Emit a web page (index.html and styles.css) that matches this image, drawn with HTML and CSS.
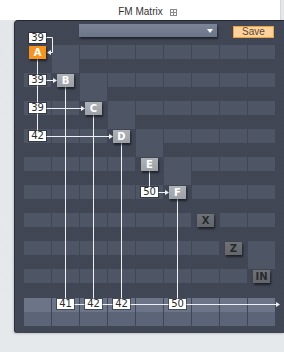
FILE: index.html
```html
<!DOCTYPE html>
<html lang="en">
<head>
    <meta charset="UTF-8">
    <title>FM Matrix</title>
    <link rel="stylesheet" href="styles.css">
</head>
<body>

<div class="title">
    <span>FM Matrix</span>
    <span class="title-icon"></span>
</div>

<div class="panel">
    <div class="toolbar">
        <div class="preset">
            <span class="arrow"></span>
        </div>
        <div class="save">Save</div>
    </div>

    <div class="matrix">
        <!-- background cells, filled in by script.js -->
        <div class="grid cells"></div>

        <!-- wires between operators -->
        <svg class="wires" width="252" height="295" viewBox="0 0 252 295">
            <g fill="none" stroke="#eef0f3" stroke-width="1">
                <path d="M22 6.5H28.5V21.5H25"/>
                <path d="M13.5 28V100"/>
                <path d="M22 49.5H31"/>
                <path d="M22 77.5H59"/>
                <path d="M22 105.5H87"/>
                <path d="M41.5 56V268"/>
                <path d="M69.5 84V268"/>
                <path d="M97.5 112V268"/>
                <path d="M125.5 139V156"/>
                <path d="M134 161.5H143"/>
                <path d="M153.5 168V268"/>
                <path d="M50 273.5H253"/>
            </g>
            <g fill="#eef0f3">
                <polygon points="23,21.5 27,19 27,24"/>
                <polygon points="33,49.5 29,47 29,52"/>
                <polygon points="61,77.5 57,75 57,80"/>
                <polygon points="89,105.5 85,103 85,108"/>
                <polygon points="145,161.5 141,159 141,164"/>
                <polygon points="256,273.5 252,271 252,276"/>
            </g>
        </svg>

        <div class="grid nodes">
            <div class="num fb-a">39</div>
            <div class="mod on m-a">A</div>

            <div class="num in-b">39</div>
            <div class="mod m-b">B</div>

            <div class="num in-c">39</div>
            <div class="mod m-c">C</div>

            <div class="num in-d">42</div>
            <div class="mod m-d">D</div>

            <div class="mod m-e">E</div>

            <div class="num in-f">50</div>
            <div class="mod m-f">F</div>

            <div class="mod fx m-x">X</div>
            <div class="mod fx m-z">Z</div>
            <div class="mod fx m-in">IN</div>

            <!-- output levels -->
            <div class="num out out-b">41</div>
            <div class="num out out-c">42</div>
            <div class="num out out-d">42</div>
            <div class="num out out-f">50</div>
        </div>
    </div>
</div>

<script src="script.js"></script>
</body>
</html>
```

FILE: styles.css
```css
body {
    margin: 0;
    width: 284px;
    height: 352px;
    overflow: hidden;
    background: linear-gradient(#e3e7e9, #e6e9eb);
    font-family: "Liberation Sans", Arial, sans-serif;
}

.title {
    width: 281px;
    height: 20px;
    box-sizing: border-box;
    padding: 4px 0 0 15px;
    background: #fff;
    border-right: 1px solid #d4d7da;
    display: flex;
    justify-content: center;
    gap: 7px;
    font-size: 10px;
    line-height: 16px;
    color: #333;
}

.title-icon {
    width: 5px;
    height: 5px;
    margin-top: 5px;
    border: 1px solid #8a8a8a;
    background:
        linear-gradient(#8a8a8a, #8a8a8a) center / 100% 1px no-repeat,
        linear-gradient(#8a8a8a, #8a8a8a) center / 1px 100% no-repeat;
}

.panel {
    margin-left: 14px;
    height: 312px;
    padding-left: 9px;
    border-top: 1px solid #232830;
    border-left: 1px solid #2b3039;
    border-radius: 4px 0 0 3px;
    background-color: #393f4e;
    background-image: radial-gradient(circle at 1px 1px, rgba(255, 255, 255, 0.06) 0.6px, transparent 0.9px);
    background-size: 2px 2px;
    box-shadow: -1px 1px 2px rgba(0, 0, 0, 0.15);
}

/* preset menu and save button */
.toolbar {
    display: flex;
    height: 17px;
    padding-left: 55px;
}

.preset {
    width: 138px;
    height: 13px;
    margin-top: 3px;
    background: linear-gradient(#7b8597, #6b7588);
    box-shadow: 1px 2px 2px rgba(0, 0, 0, 0.5);
    display: flex;
    justify-content: flex-end;
    align-items: center;
}

.preset .arrow {
    width: 0;
    height: 0;
    margin-right: 4px;
    border-left: 3.5px solid transparent;
    border-right: 3.5px solid transparent;
    border-top: 4px solid #fff;
}

.save {
    width: 41px;
    height: 12px;
    box-sizing: border-box;
    margin: 5px 0 0 16px;
    background: #fdd29d;
    border: 1px solid #f2a03a;
    color: #5b4838;
    font-size: 10px;
    line-height: 10px;
    text-align: center;
}

/* the matrix: three layers stacked in one grid cell */
.matrix {
    display: grid;
    margin-top: -7px;
}

.matrix > * {
    grid-area: 1 / 1;
}

.grid {
    display: grid;
    grid-template-columns: repeat(9, 27px);
    grid-template-rows: repeat(18, 14px) 15px 14px 14px;
    column-gap: 1px;
}

.cells i.lit {
    background: rgba(190, 205, 235, 0.11);
}

.cells i.out {
    background: #6b7587;
}

.cells i.out.low {
    background: #5b6577;
}

.wires {
    overflow: visible;
}

.mod {
    width: 17px;
    height: 13px;
    justify-self: center;
    align-self: end;
    background: linear-gradient(#aeb2b7, #9ca1a7);
    color: #fff;
    font: bold 10px/13px "DejaVu Sans", sans-serif;
    text-align: center;
    box-shadow: 1px 2px 2px rgba(0, 0, 0, 0.55);
}

.mod.on {
    background: #f7941e;
}

.mod.fx {
    background: linear-gradient(#6e7277, #63676c);
    color: #26292d;
}

.num {
    width: 17px;
    height: 10px;
    justify-self: center;
    align-self: center;
    background: #fff;
    color: #2b2d30;
    font: 10px/10px "DejaVu Sans", sans-serif;
    text-align: center;
    box-shadow: 0 0 0 1px rgba(20, 24, 30, 0.45);
}

.num.out {
    align-self: start;
    margin-top: 1px;
}

.fb-a { grid-area: 1 / 1; }
.m-a { grid-area: 2 / 1; }
.in-b { grid-area: 4 / 1; }
.m-b { grid-area: 4 / 2; }
.in-c { grid-area: 6 / 1; }
.m-c { grid-area: 6 / 3; }
.in-d { grid-area: 8 / 1; }
.m-d { grid-area: 8 / 4; }
.m-e { grid-area: 10 / 5; }
.in-f { grid-area: 12 / 5; }
.m-f { grid-area: 12 / 6; }
.m-x { grid-area: 14 / 7; }
.m-z { grid-area: 16 / 8; }
.m-in { grid-area: 18 / 9; }

.out-b { grid-area: 20 / 2; }
.out-c { grid-area: 20 / 3; }
.out-d { grid-area: 20 / 4; }
.out-f { grid-area: 20 / 6; }
```

FILE: script.js
```js
// build the background cells of the matrix, row by row
const cells = document.querySelector(".cells");
const cols = 9;

// light cell under each operator row (column of the next operator), -1 = none
const below = [1, 2, 3, 4, 5, -1, -1, 8];

function row(classFor) {
    for (let c = 0; c < cols; c++) {
        const cell = document.createElement("i");
        cell.className = classFor(c);
        cells.appendChild(cell);
    }
}

row(() => "");
for (let m = 0; m < 9; m++) {
    row(c => c === m ? "" : "lit");
    if (m < 8) row(c => c === below[m] ? "lit" : "");
}
row(() => "");
row(() => "out");
row(() => "out low");
```
